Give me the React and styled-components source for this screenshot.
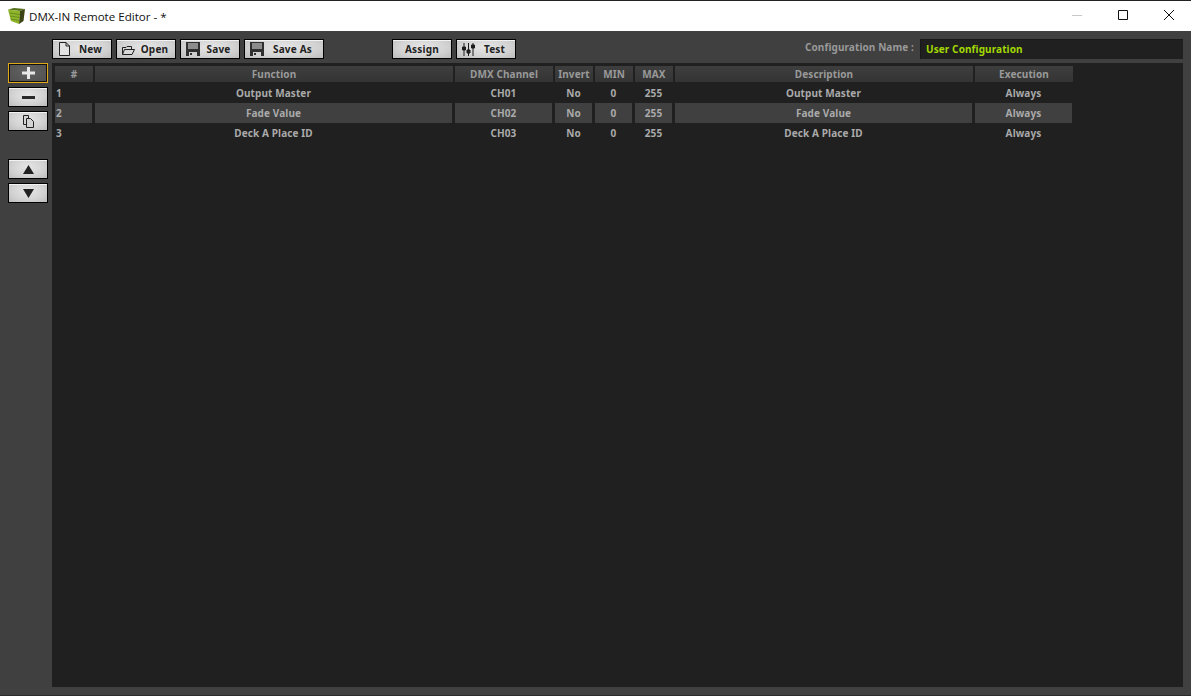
import styled, { createGlobalStyle } from 'styled-components'

const COLUMNS = '40px 360px 100px 40px 40px 40px 300px 100px'

const headers = ['#', 'Function', 'DMX Channel', 'Invert', 'MIN', 'MAX', 'Description', 'Execution']

const rows = [
  { id: 1, fn: 'Output Master', channel: 'CH01', invert: 'No', min: 0, max: 255, description: 'Output Master', execution: 'Always' },
  { id: 2, fn: 'Fade Value', channel: 'CH02', invert: 'No', min: 0, max: 255, description: 'Fade Value', execution: 'Always' },
  { id: 3, fn: 'Deck A Place ID', channel: 'CH03', invert: 'No', min: 0, max: 255, description: 'Deck A Place ID', execution: 'Always' },
]

const CubeIcon = () => (
  <svg width="17" height="16" viewBox="0 0 17 16">
    <path d="M0 1.5 L6 0 L17 1 L12 3 Z" fill="#55701a" />
    <path d="M0 1.5 L12 3 L11 16 L3 13 Z" fill="#8fb52a" />
    <path d="M12 3 L17 1 L15.5 13 L11 16 Z" fill="#3c4416" />
    <path d="M1.5 5 L12 6.5 M2 8 L11.7 9.5 M2.5 11 L11.4 12.5" stroke="#6a8c1c" strokeWidth="1" />
  </svg>
)

const NewIcon = () => (
  <svg width="11" height="14" viewBox="0 0 11 14" fill="none" stroke="#222" strokeWidth="1">
    <path d="M0.5 0.5 H7 L10.5 4 V13.5 H0.5 Z" fill="#e2e2e2" />
    <path d="M7 0.5 V4 H10.5" />
  </svg>
)

const OpenIcon = () => (
  <svg width="13" height="9" viewBox="0 0 13 9" fill="none" stroke="#222" strokeWidth="1">
    <path d="M0.5 8.5 V1.5 H4 L5 0.5 H9.5 V3" />
    <path d="M0.5 8.5 L2.5 3.5 H12.5 L10 8.5 Z" fill="#d8d8d8" />
  </svg>
)

const SaveIcon = () => (
  <svg width="14" height="14" viewBox="0 0 14 14">
    <path d="M0 0 H14 V14 H0 Z" fill="#303030" />
    <path d="M2 1 H12 V7 H2 Z" fill="#8c8c8c" />
    <path d="M3 10 H11 V14 H3 Z" fill="#cfcfcf" />
    <path d="M4 11 H6 V13 H4 Z" fill="#303030" />
  </svg>
)

const FaderIcon = () => (
  <svg width="13" height="13" viewBox="0 0 13 13" fill="#1c1c1c" stroke="#1c1c1c">
    <path d="M2 0 V13 M6.5 0 V13 M11 0 V13" strokeWidth="1" />
    <path d="M0.5 4 H3.5 V7 H0.5 Z M5 7 H8 V10 H5 Z M9.5 2 H12.5 V5 H9.5 Z" strokeWidth="1" />
  </svg>
)

const CopyIcon = () => (
  <svg width="11" height="13" viewBox="0 0 11 13" fill="#d4d4d4" stroke="#222" strokeWidth="1">
    <path d="M0.5 0.5 H5.5 V9.5 H0.5 Z" />
    <path d="M3.5 3.5 H7.5 L10.5 6.5 V12.5 H3.5 Z" />
  </svg>
)

const ArrowIcon = ({ down }) => (
  <svg width="11" height="9" viewBox="0 0 11 9">
    <path d={down ? 'M0 0 H11 L5.5 9 Z' : 'M5.5 0 L11 9 H0 Z'} fill="#222" />
  </svg>
)

const App = () => (
  <>
    <GlobalStyle />
    <Window>
      <TitleBar>
        <CubeIcon />
        <WindowTitle>DMX-IN Remote Editor - *</WindowTitle>
        <WindowControls>
          <WindowControl>
            <svg width="10" height="10" viewBox="0 0 10 10">
              <path d="M0 5.5 H10" stroke="#c8c8c8" />
            </svg>
          </WindowControl>
          <WindowControl>
            <svg width="10" height="10" viewBox="0 0 10 10">
              <path d="M0.5 0.5 H9.5 V9.5 H0.5 Z" stroke="#111" fill="none" />
            </svg>
          </WindowControl>
          <WindowControl>
            <svg width="10" height="10" viewBox="0 0 10 10">
              <path d="M0 0 L10 10 M10 0 L0 10" stroke="#111" fill="none" />
            </svg>
          </WindowControl>
        </WindowControls>
      </TitleBar>
      <Body>
        <Sidebar>
          <SideButton $active>
            <svg width="13" height="12" viewBox="0 0 13 12">
              <path d="M0 6 H13 M6.5 0 V12" stroke="#e8e8e8" strokeWidth="3" />
            </svg>
          </SideButton>
          <SideButton>
            <svg width="13" height="3" viewBox="0 0 13 3">
              <path d="M0 1.5 H13" stroke="#2a2a2a" strokeWidth="3" />
            </svg>
          </SideButton>
          <SideButton>
            <CopyIcon />
          </SideButton>
          <SideSpacer />
          <SideButton>
            <ArrowIcon />
          </SideButton>
          <SideButton>
            <ArrowIcon down />
          </SideButton>
        </Sidebar>
        <Main>
          <Toolbar>
            <ToolButton $width={60}>
              <IconSlot><NewIcon /></IconSlot>
              <ButtonLabel>New</ButtonLabel>
            </ToolButton>
            <ToolButton $width={60}>
              <IconSlot $low><OpenIcon /></IconSlot>
              <ButtonLabel>Open</ButtonLabel>
            </ToolButton>
            <ToolButton $width={60}>
              <IconSlot><SaveIcon /></IconSlot>
              <ButtonLabel>Save</ButtonLabel>
            </ToolButton>
            <ToolButton $width={80}>
              <IconSlot><SaveIcon /></IconSlot>
              <ButtonLabel>Save As</ButtonLabel>
            </ToolButton>
            <ToolGroup>
              <ToolButton $width={60}>
                <ButtonLabel>Assign</ButtonLabel>
              </ToolButton>
              <ToolButton $width={60}>
                <IconSlot><FaderIcon /></IconSlot>
                <ButtonLabel>Test</ButtonLabel>
              </ToolButton>
            </ToolGroup>
            <ConfigLabel>Configuration Name :</ConfigLabel>
            <ConfigInput>User Configuration</ConfigInput>
          </Toolbar>
          <Panel>
            <HeaderRow>
              {headers.map((h) => (
                <HeaderCell key={h}>{h}</HeaderCell>
              ))}
            </HeaderRow>
            {rows.map((r) => (
              <Row key={r.id}>
                <IdCell $alt={r.id === 2}>{r.id}</IdCell>
                <Cell $alt={r.id === 2}>{r.fn}</Cell>
                <Cell $alt={r.id === 2}>{r.channel}</Cell>
                <Cell $alt={r.id === 2}>{r.invert}</Cell>
                <Cell $alt={r.id === 2}>{r.min}</Cell>
                <Cell $alt={r.id === 2}>{r.max}</Cell>
                <Cell $alt={r.id === 2}>{r.description}</Cell>
                <Cell $alt={r.id === 2}>{r.execution}</Cell>
              </Row>
            ))}
          </Panel>
        </Main>
      </Body>
    </Window>
  </>
)

export default App

const GlobalStyle = createGlobalStyle`
  html, body {
    margin: 0;
    padding: 0;
    background: #404040;
  }
  * {
    box-sizing: border-box;
  }
`

const Window = styled.div`
  width: 1191px;
  height: 696px;
  display: flex;
  flex-direction: column;
  overflow: hidden;
  background: #404040;
  border-bottom: 1px solid #2a2a2a;
  font-family: 'Noto Sans', 'DejaVu Sans', sans-serif;
`

const TitleBar = styled.div`
  height: 31px;
  flex: none;
  display: flex;
  align-items: center;
  padding-left: 8px;
  background: #fff;
  border-top: 1px solid #222;
`

const WindowTitle = styled.span`
  margin-left: 4px;
  font-family: 'Open Sans', 'Noto Sans', sans-serif;
  font-size: 11.6px;
  color: #111;
`

const WindowControls = styled.div`
  margin-left: auto;
  margin-right: -1px;
  display: flex;
`

const WindowControl = styled.div`
  width: 46px;
  height: 30px;
  padding-bottom: 2px;
  display: flex;
  align-items: center;
  justify-content: center;
`

const Body = styled.div`
  flex: 1;
  display: flex;
  min-height: 0;
`

const Sidebar = styled.div`
  width: 52px;
  flex: none;
  display: flex;
  flex-direction: column;
  gap: 4px;
  padding: 32px 0 0 8px;
`

const SideSpacer = styled.div`
  height: 20px;
`

const SideButton = styled.div`
  width: 40px;
  height: 20px;
  display: flex;
  align-items: center;
  justify-content: center;
  border: 1px solid ${(p) => (p.$active ? '#e0a818' : '#000')};
  background: ${(p) =>
    p.$active
      ? 'radial-gradient(ellipse at 50% 40%, #626262 0%, #505050 100%)'
      : 'radial-gradient(ellipse at 50% 40%, #e6e6e6 0%, #d2d2d2 60%, #bcbcbc 100%)'};
  box-shadow: ${(p) => (p.$active ? 'inset 0 0 0 1px #111' : 'inset 0 1px 0 #f2f2f2')};
`

const Main = styled.div`
  flex: 1;
  min-width: 0;
  display: flex;
  flex-direction: column;
  padding: 0 8px 8px 0;
`

const Toolbar = styled.div`
  height: 32px;
  flex: none;
  display: flex;
  align-items: flex-start;
  gap: 4px;
  padding-top: 8px;
`

const ToolGroup = styled.div`
  display: flex;
  gap: 4px;
  margin-left: 64px;
`

const ToolButton = styled.div`
  width: ${(p) => p.$width}px;
  height: 20px;
  display: flex;
  align-items: center;
  padding: 0 3px;
  border: 1px solid #000;
  background: radial-gradient(ellipse at 50% 40%, #e6e6e6 0%, #d2d2d2 60%, #bcbcbc 100%);
  box-shadow: inset 0 1px 0 #f2f2f2;
`

const IconSlot = styled.span`
  width: 17px;
  flex: none;
  display: flex;
  align-items: center;
  justify-content: center;
  padding-top: ${(p) => (p.$low ? '3px' : '0')};
`

const ButtonLabel = styled.span`
  flex: 1;
  text-align: center;
  font-size: 10px;
  font-weight: 700;
  color: #222;
  letter-spacing: 0.2px;
`

const ConfigLabel = styled.span`
  margin-left: auto;
  margin-right: 2px;
  line-height: 17px;
  font-size: 10px;
  font-weight: 700;
  color: #999;
  letter-spacing: 0.1px;
`

const ConfigInput = styled.div`
  width: 263px;
  height: 20px;
  display: flex;
  align-items: center;
  padding: 0 0 2px 5px;
  background: #202020;
  border-top: 1px solid #181818;
  border-left: 1px solid #181818;
  font-size: 10px;
  font-weight: 700;
  color: #a3d900;
  letter-spacing: 0.1px;
`

const Panel = styled.div`
  flex: 1;
  min-height: 0;
  padding: 3px 0 0 3px;
  background: #202020;
`

const HeaderRow = styled.div`
  display: grid;
  grid-template-columns: ${COLUMNS};
  height: 17px;
`

const HeaderCell = styled.div`
  height: 16px;
  margin-right: 2px;
  display: flex;
  align-items: center;
  justify-content: center;
  background: linear-gradient(#3e3e3e, #343434);
  font-size: 10px;
  font-weight: 700;
  color: #999;
  letter-spacing: 0.1px;
`

const Row = styled.div`
  display: grid;
  grid-template-columns: ${COLUMNS};
  height: 20px;
`

const Cell = styled.div`
  margin-right: 3px;
  display: flex;
  align-items: center;
  justify-content: center;
  background: ${(p) => (p.$alt ? '#404040' : 'transparent')};
  font-size: 10px;
  font-weight: 700;
  color: #aaa;
  letter-spacing: 0.1px;
`

const IdCell = styled(Cell)`
  justify-content: flex-start;
  padding-left: 1px;
`
